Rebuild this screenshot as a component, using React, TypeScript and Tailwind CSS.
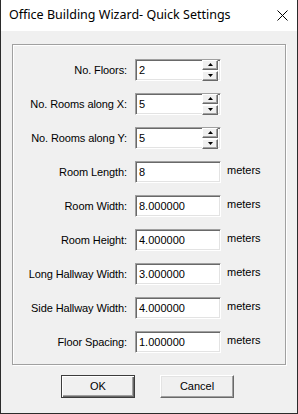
import React from 'react';

type Field = { label: string; value: string; spin?: boolean };

const fields: Field[] = [
  { label: 'No. Floors:', value: '2', spin: true },
  { label: 'No. Rooms along X:', value: '5', spin: true },
  { label: 'No. Rooms along Y:', value: '5', spin: true },
  { label: 'Room Length:', value: '8' },
  { label: 'Room Width:', value: '8.000000' },
  { label: 'Room Height:', value: '4.000000' },
  { label: 'Long Hallway Width:', value: '3.000000' },
  { label: 'Side Hallway Width:', value: '4.000000' },
  { label: 'Floor Spacing:', value: '1.000000' },
];

const SpinButton: React.FC<{ up?: boolean }> = ({ up }) => (
  <div className="flex h-[10px] w-[16px] items-center justify-center border-t border-l border-t-white border-l-white border-r border-b border-r-[#696969] border-b-[#696969] bg-[#f0f0f0] shadow-[inset_-1px_-1px_0_#a0a0a0]">
    <svg width="5" height="3" viewBox="0 0 5 3">
      {up ? <polygon points="2.5,0 5,3 0,3" fill="#000" /> : <polygon points="0,0 5,0 2.5,3" fill="#000" />}
    </svg>
  </div>
);

const Row: React.FC<{ field: Field }> = ({ field }) => (
  <div className="flex h-[22px] items-center">
    <div className="w-[114px] text-right tracking-[-0.1px]">{field.label}</div>
    <div className="ml-[8px] flex h-[22px] w-[86px] items-center justify-between border-t border-l border-t-[#a0a0a0] border-l-[#a0a0a0] border-r border-b border-r-white border-b-white bg-white shadow-[inset_1px_1px_0_#696969,inset_-1px_-1px_0_#e3e3e3]">
      <span className="pl-[3px]">{field.value}</span>
      {field.spin && (
        <div className="mr-[2px] flex flex-col gap-[1px]">
          <SpinButton up />
          <SpinButton />
        </div>
      )}
    </div>
    {!field.spin && <div className="mb-[4px] ml-[6px]">meters</div>}
  </div>
);

export default function App() {
  return (
    <div
      className="flex h-[414px] w-[298px] flex-col border border-t-0 border-[#2b2b2b] bg-[#f0f0f0] text-[11px] text-black"
      style={{ fontFamily: '"Liberation Sans", Arial, sans-serif' }}
    >
      <div className="flex h-[31px] shrink-0 items-center justify-between bg-white pl-[8px] pr-[9px]">
        <span className="text-[12.5px]" style={{ fontFamily: '"Noto Sans", "Liberation Sans", sans-serif' }}>
          Office Building Wizard- Quick Settings
        </span>
        <svg width="11" height="11" viewBox="0 0 11 11">
          <path d="M0.5 0.5 L10.5 10.5 M10.5 0.5 L0.5 10.5" stroke="#000" strokeWidth="1" />
        </svg>
      </div>

      <div className="ml-[11px] mt-[13px] flex w-[274px] flex-col gap-[12px] border border-[#a0a0a0] pb-[11px] pt-[14px] shadow-[inset_1px_1px_0_#fff,1px_1px_0_#fff]">
        {fields.map((f) => (
          <Row key={f.label} field={f} />
        ))}
      </div>

      <div className="ml-[60px] mt-[10px] flex gap-[25px]">
        <button className="h-[23px] w-[74px] border border-[#3c3c3c] bg-[#f0f0f0] shadow-[inset_1px_1px_0_#fff,inset_-1px_-1px_0_#696969,inset_-2px_-2px_0_#a0a0a0]">
          OK
        </button>
        <button className="h-[23px] w-[74px] border-t border-l border-t-white border-l-white border-r border-b border-r-[#696969] border-b-[#696969] bg-[#f0f0f0] shadow-[inset_-1px_-1px_0_#a0a0a0,inset_1px_1px_0_#e3e3e3]">
          Cancel
        </button>
      </div>
    </div>
  );
}
